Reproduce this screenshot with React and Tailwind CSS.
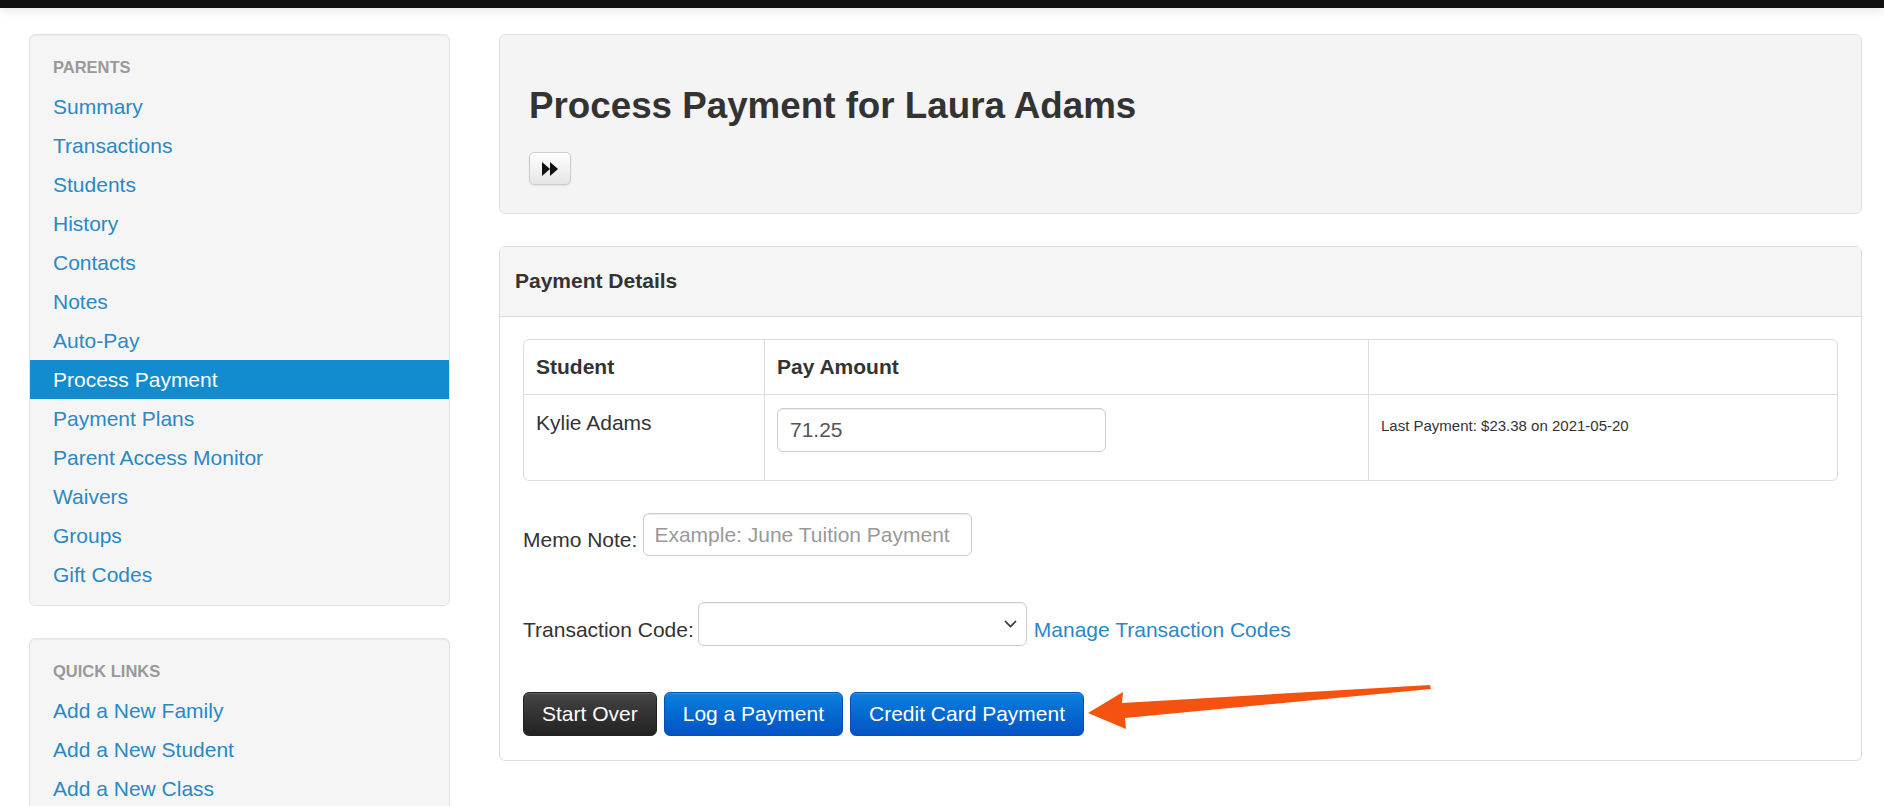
import React from 'react';

const parentLinks = [
  'Summary',
  'Transactions',
  'Students',
  'History',
  'Contacts',
  'Notes',
  'Auto-Pay',
  'Process Payment',
  'Payment Plans',
  'Parent Access Monitor',
  'Waivers',
  'Groups',
  'Gift Codes',
];

const quickLinks = ['Add a New Family', 'Add a New Student', 'Add a New Class'];

const NavWell = ({ title, links, active, className = '' }) => (
  <div className={`rounded-[6px] border border-[#e3e3e3] bg-[#f5f5f5] pb-[11px] pt-[13px] shadow-[inset_0_1px_1px_rgba(0,0,0,0.05)] ${className}`}>
    <div className="flex h-[39px] items-center px-[23px] text-[16.5px] font-bold uppercase text-[#999]">
      {title}
    </div>
    {links.map((link) => (
      <a
        key={link}
        href="#"
        className={
          link === active
            ? 'flex h-[39px] items-center bg-[#138bcf] px-[23px] text-[21px] text-white'
            : 'flex h-[39px] items-center px-[23px] text-[21px] text-[#2a88c5]'
        }
      >
        {link}
      </a>
    ))}
  </div>
);

const Btn = ({ children, dark }) => (
  <button
    className={
      dark
        ? 'h-[44px] rounded-[6px] border border-[#222] bg-gradient-to-b from-[#454545] to-[#222] px-[18px] text-[21px] text-white shadow-[inset_0_1px_0_rgba(255,255,255,0.15)]'
        : 'h-[44px] rounded-[6px] border border-[#0550b8] bg-gradient-to-b from-[#0d80dc] to-[#0552c4] px-[18px] text-[21px] text-white shadow-[inset_0_1px_0_rgba(255,255,255,0.15)]'
    }
  >
    {children}
  </button>
);

const App = () => {
  return (
    <div className="relative min-h-[806px] bg-white font-['Liberation_Sans',Arial,sans-serif] text-[#333]">
      <div className="h-[8px] bg-[#111] shadow-[0_2px_10px_rgba(0,0,0,0.12)]" />

      <div className="flex gap-[49px] pl-[29px] pr-[22px] pt-[26px]">
        {/* sidebar */}
        <div className="w-[421px] shrink-0">
          <NavWell title="Parents" links={parentLinks} active="Process Payment" />
          <NavWell title="Quick Links" links={quickLinks} className="mt-[32px]" />
        </div>

        {/* main */}
        <div className="flex-1">
          <div className="rounded-[6px] border border-[#e0e0e0] bg-[#f4f4f4] pb-[28px] pl-[29px] pt-[41px]">
            <h3 className="text-[36.75px] font-bold leading-[60px] text-[#333]">
              Process Payment for Laura Adams
            </h3>
            <button className="mt-[16px] flex h-[33px] w-[42px] items-center justify-center rounded-[5px] border border-[#ccc] bg-gradient-to-b from-white to-[#e6e6e6] shadow-[0_1px_2px_rgba(0,0,0,0.08)]">
              <svg width="16" height="14" viewBox="0 0 16 14" fill="#111">
                <polygon points="0,0 8,7 0,14" />
                <polygon points="8,0 16,7 8,14" />
              </svg>
            </button>
          </div>

          <div className="mt-[32px] rounded-[6px] border border-[#ddd] bg-white">
            <div className="flex h-[70px] items-center border-b border-[#ddd] bg-[#f5f5f5] pb-[2px] pl-[15px] text-[21px] font-bold text-[#333]">
              Payment Details
            </div>

            <div className="px-[23px] pb-[24px] pt-[22px]">
              <div className="overflow-hidden rounded-[6px] border border-[#ddd]">
                <div className="grid h-[55px] grid-cols-[240px_604px_1fr] border-b border-[#ddd] text-[21px] font-bold">
                  <div className="flex items-center px-[12px]">Student</div>
                  <div className="flex items-center border-l border-[#ddd] px-[12px]">Pay Amount</div>
                  <div className="border-l border-[#ddd]" />
                </div>
                <div className="grid h-[85px] grid-cols-[240px_604px_1fr]">
                  <div className="px-[12px] pt-[13px] text-[21px] leading-[30px]">Kylie Adams</div>
                  <div className="border-l border-[#ddd] px-[12px] pt-[13px]">
                    <input
                      readOnly
                      value="71.25"
                      className="h-[44px] w-[329px] rounded-[6px] border border-[#ccc] bg-white px-[12px] text-[21px] text-[#555] shadow-[inset_0_1px_1px_rgba(0,0,0,0.075)] outline-none"
                    />
                  </div>
                  <div className="border-l border-[#ddd] px-[12px] pt-[16px] text-[15px] leading-[30px]">
                    Last Payment: $23.38 on 2021-05-20
                  </div>
                </div>
              </div>

              <div className="mt-[32px] flex items-end gap-[6px]">
                <span className="pb-[1px] text-[21px] leading-[30px]">Memo Note:</span>
                <input
                  placeholder="Example: June Tuition Payment"
                  className="h-[43px] w-[329px] rounded-[6px] border border-[#ccc] bg-white px-[10px] text-[21px] text-[#555] shadow-[inset_0_1px_1px_rgba(0,0,0,0.075)] outline-none placeholder:text-[#999]"
                />
              </div>

              <div className="mt-[46px] flex items-end">
                <span className="pb-[1px] text-[21px] leading-[30px]">Transaction Code:</span>
                <div className="relative ml-[4px]">
                  <select className="h-[44px] w-[329px] appearance-none rounded-[6px] border border-[#ccc] bg-white shadow-[inset_0_1px_1px_rgba(0,0,0,0.05)] outline-none" />
                  <svg
                    className="pointer-events-none absolute right-[10px] top-[18px]"
                    width="13"
                    height="8"
                    viewBox="0 0 13 8"
                    fill="none"
                    stroke="#333"
                    strokeWidth="1.7"
                  >
                    <polyline points="1,1 6.5,6.5 12,1" />
                  </svg>
                </div>
                <a href="#" className="ml-[7px] pb-[1px] text-[21px] leading-[30px] text-[#2a88c5]">
                  Manage Transaction Codes
                </a>
              </div>

              <div className="mt-[46px] flex gap-[7px]">
                <Btn dark>Start Over</Btn>
                <Btn>Log a Payment</Btn>
                <Btn>Credit Card Payment</Btn>
              </div>
            </div>
          </div>
        </div>
      </div>

      {/* annotation arrow */}
      <svg
        className="pointer-events-none absolute left-[1080px] top-[680px]"
        width="360"
        height="56"
        viewBox="0 0 360 56"
      >
        <polygon
          points="8,33 43,12 42,23 350,5 351,9 45,38 46,49"
          fill="#f5520f"
        />
      </svg>
    </div>
  );
};

export default App;
